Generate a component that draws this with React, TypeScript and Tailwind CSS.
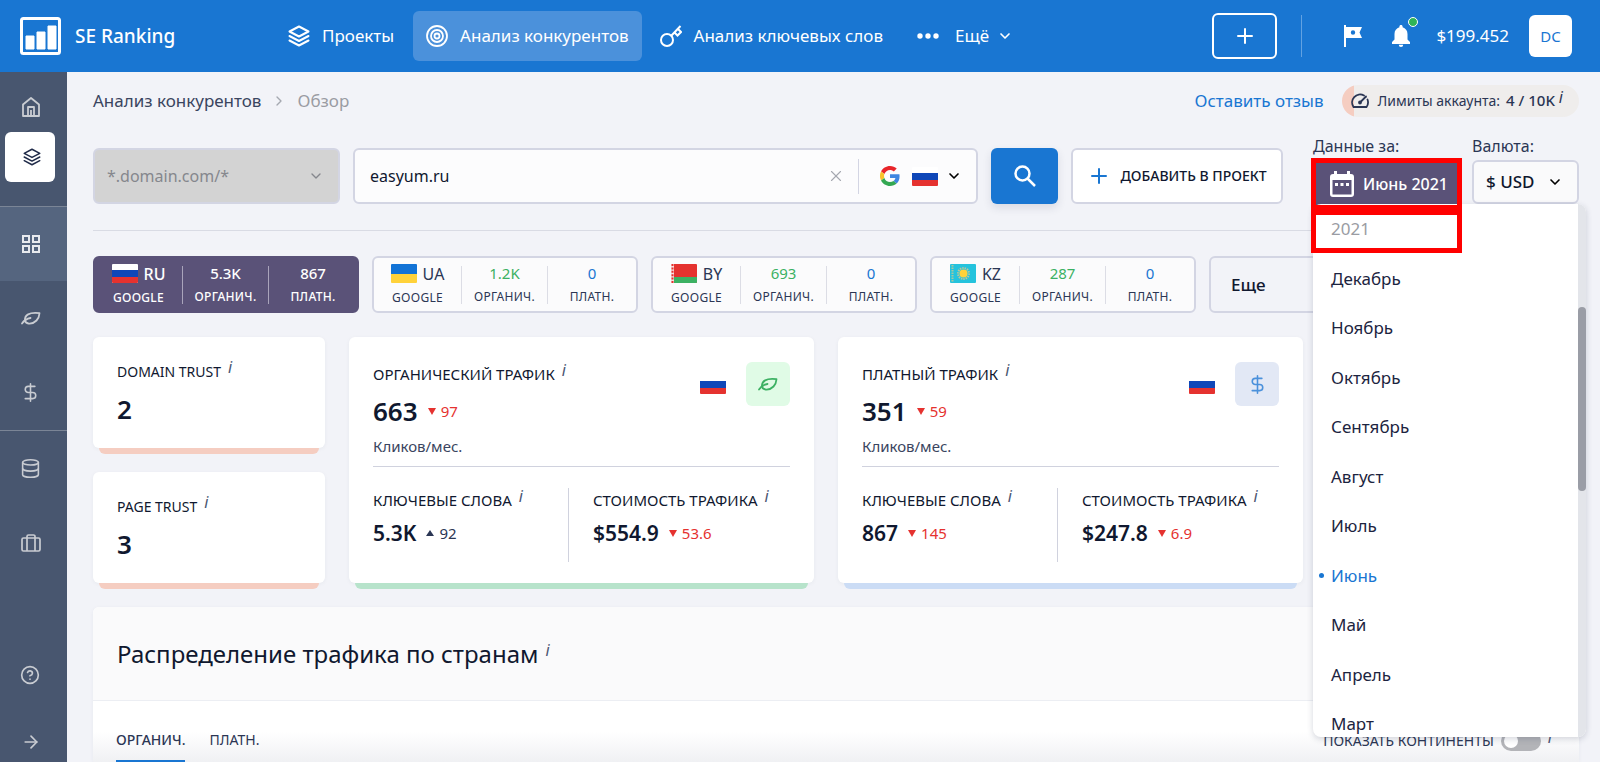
import React from 'react';
import {
  ArrowRight,
  ChevronDown,
  ChevronRight,
  CircleHelp,
  Database,
  DollarSign,
  Plus,
  X,
} from 'lucide-react';

const regions = [
  { code: 'RU', organic: '5.3K', paid: '867', active: true },
  { code: 'UA', organic: '1.2K', paid: '0' },
  { code: 'BY', organic: '693', paid: '0' },
  { code: 'KZ', organic: '287', paid: '0' },
];

const months = ['Декабрь', 'Ноябрь', 'Октябрь', 'Сентябрь', 'Август', 'Июль', 'Июнь', 'Май', 'Апрель', 'Март'];

function Flag({ code }: { code: string }) {
  return (
    <svg viewBox="0 0 26 19" className="w-[26px] h-[19px] shrink-0" aria-label={code}>
      {code === 'RU' && (
        <>
          <rect width="26" height="19" rx="1" fill="#fff" />
          <rect y="6" width="26" height="7" fill="#0f47b8" />
          <path d="M0 13h26v5a1 1 0 0 1-1 1H1a1 1 0 0 1-1-1z" fill="#e5322f" />
        </>
      )}
      {code === 'UA' && (
        <>
          <path d="M1 0h24a1 1 0 0 1 1 1v9H0V1a1 1 0 0 1 1-1z" fill="#1273d6" />
          <path d="M0 10h26v8a1 1 0 0 1-1 1H1a1 1 0 0 1-1-1z" fill="#ffd23a" />
        </>
      )}
      {code === 'BY' && (
        <>
          <rect width="26" height="19" rx="1" fill="#e5322f" />
          <path d="M3 13h23v5a1 1 0 0 1-1 1H3z" fill="#3cb163" />
          <rect width="3" height="19" fill="#f7dede" />
          <path d="M1.5 0v19" stroke="#e5322f" strokeWidth="2" strokeDasharray="2 1.4" />
        </>
      )}
      {code === 'KZ' && (
        <>
          <rect width="26" height="19" rx="1" fill="#25c3dd" />
          <path d="M2.5 1v17" stroke="#a9c7a0" strokeWidth="2" strokeDasharray="1.5 1" />
          <circle cx="13.5" cy="9.5" r="5.5" fill="none" stroke="#bfc69a" strokeWidth="2" strokeDasharray="1.4 1" />
          <circle cx="13.5" cy="9.5" r="4" fill="#ffd23a" />
        </>
      )}
    </svg>
  );
}

function Layers({ className, stroke }: { className: string; stroke: number }) {
  return (
    <svg viewBox="0 0 22 22" className={className} fill="none" stroke="currentColor" strokeWidth={stroke} strokeLinejoin="round" strokeLinecap="round">
      <path d="M11 1.5 20.5 6.5 11 11.5 1.5 6.5z" />
      <path d="M1.5 11 11 16l9.5-5M1.5 15.500l9.500 5 9.500-5" />
    </svg>
  );
}

function Leaf() {
  return (
    <svg viewBox="0 0 20 14" className="w-5 h-[14px]" fill="none" stroke="currentColor" strokeWidth="1.8" strokeLinecap="round" strokeLinejoin="round">
      <path d="M1 12.500C3 9.500 6 7.500 9.500 7" />
      <path d="M4 9.500C3.500 4 8 1 18.500 2.200 18.300 5 17.500 7.500 15.500 9.500 13 12 10 12.800 7.500 12.500 5.500 12.200 4.300 11.200 4 9.500z" />
    </svg>
  );
}

function Dollar() {
  return <DollarSign className="w-[21px] h-[21px]" strokeWidth={1.8} />;
}

function GoogleLogo() {
  return (
    <svg viewBox="0 0 48 48" className="w-5 h-5">
      <path fill="#e8252a" d="M24 9.500c3.500 0 6.700 1.200 9.200 3.600l6.900-6.900C35.900 2.400 30.500 0 24 0 14.600 0 6.500 5.400 2.600 13.200l8 6.200C12.400 13.700 17.700 9.500 24 9.500z" />
      <path fill="#3f86e0" d="M47 24.500c0-1.600-.2-3.100-.4-4.500H24v9h12.900c-.6 3-2.300 5.500-4.800 7.200l7.700 6C44.400 38 47 31.800 47 24.500z" />
      <path fill="#f9c32a" d="M10.500 28.600A14.500 14.500 0 0 1 10.500 19.400l-8-6.200a24 24 0 0 0 0 21.600z" />
      <path fill="#34a853" d="M24 48c6.500 0 11.900-2.100 15.900-5.800l-7.700-6c-2.200 1.500-4.900 2.300-8.200 2.300-6.300 0-11.600-4.200-13.500-9.900l-8 6.200C6.500 42.600 14.600 48 24 48z" />
    </svg>
  );
}

function Info() {
  return <sup className="ml-[7px] -top-1 text-base leading-none italic font-normal text-[#4a5672]">i</sup>;
}

function Delta({ value, up }: { value: string; up?: boolean }) {
  return (
    <span className={`flex items-center gap-[5px] text-[15px] font-normal ${up ? 'text-[#2b3654]' : 'text-[#e5322f]'}`}>
      <svg viewBox="0 0 8 7" className="w-2 h-[7px]" fill="currentColor">
        {up ? <path d="M4 0 8 6H0z" /> : <path d="M0 0h8L4 7z" />}
      </svg>
      {value}
    </span>
  );
}

function Header() {
  return (
    <header className="flex h-[72px] shrink-0 items-center bg-[#1976d2] pl-5 pr-7 text-white">
      <a href="#" className="flex w-[268px] shrink-0 items-center gap-[14px] text-[19px] font-medium">
        <svg viewBox="0 0 41 38" className="h-[38px] w-[41px]">
          <rect x="1.5" y="1.5" width="38" height="35" rx="2" fill="none" stroke="#fff" strokeWidth="3" />
          <path d="M6 19h8v13H6zM17 15h8v17h-8zM28 9h8v23h-8z" fill="#fff" stroke="#fff" strokeLinejoin="round" />
        </svg>
        SE Ranking
      </a>
      <nav className="flex items-center text-[17px] font-[450]">
        <a href="#" className="flex items-center gap-3 pr-[19px]">
          <Layers className="w-[22px] h-[22px]" stroke={2} />
          Проекты
        </a>
        <a href="#" className="flex h-[50px] items-center gap-3 rounded-md bg-[#4b91db] px-[13px]">
          <svg viewBox="0 0 22 22" className="w-[22px] h-[22px]" fill="none" stroke="#fff" strokeWidth="1.8">
            <circle cx="11" cy="11" r="10" />
            <circle cx="11" cy="11" r="6" />
            <circle cx="11" cy="11" r="2.5" />
          </svg>
          Анализ конкурентов
        </a>
        <a href="#" className="flex items-center gap-3 pl-[18px]">
          <svg viewBox="0 0 22 22" className="w-[22px] h-[22px]" fill="none" stroke="#fff" strokeWidth="2">
            <circle cx="7" cy="15" r="6" />
            <path d="M11.500 10.500 20.500 1M14.500 7.500l3 3 3.500-3.500-3-3" />
          </svg>
          Анализ ключевых слов
        </a>
        <button className="ml-[34px] flex items-center gap-4">
          <svg viewBox="0 0 22 6" className="w-[22px] h-[6px]" fill="#fff">
            <circle cx="3" cy="3" r="2.7" />
            <circle cx="11" cy="3" r="2.7" />
            <circle cx="19" cy="3" r="2.7" />
          </svg>
          Ещё
          <ChevronDown className="-ml-2 w-4 h-4" strokeWidth={2.5} />
        </button>
      </nav>
      <div className="ml-auto flex items-center">
        <button aria-label="Добавить" className="flex h-[46px] w-[65px] items-center justify-center rounded-md border-2 border-white">
          <Plus className="w-6 h-6" />
        </button>
        <span className="ml-6 h-[42px] w-px bg-[#62a2e2]" />
        <button aria-label="Обучение" className="ml-[42px]">
          <svg viewBox="0 0 18 22" className="w-[18px] h-[22px]" fill="#fff">
            <path fillRule="evenodd" d="M0 0h2v2h16l-2.500 5.500L18 13H2v9H0zM9 5.300a2.200 2.200 0 1 0 0 4.400 2.200 2.200 0 0 0 0-4.400z" />
          </svg>
        </button>
        <button aria-label="Уведомления" className="relative ml-[30px]">
          <svg viewBox="0 0 18 22" className="w-[18px] h-[22px]" fill="#fff">
            <path d="M9 0c1 0 1.600.7 1.600 1.600v.6C13.500 3 15.500 5.500 15.500 9v5.500L18 17v2H0v-2l2.500-2.500V9c0-3.500 2-6 4.900-6.800v-.6C7.400.7 8 0 9 0zM6.800 19.800h4.400a2.200 2.200 0 0 1-4.400 0z" />
          </svg>
          <span className="absolute -right-2 -top-2 h-[10px] w-[10px] rounded-full border border-white bg-[#2fb457]" />
        </button>
        <span className="ml-[26px] text-[17px]">$199.452</span>
        <button className="ml-5 h-[42px] w-[43px] rounded-md bg-white text-[15px] text-[#1976d2]">DC</button>
      </div>
    </header>
  );
}

function Sidebar() {
  return (
    <aside className="flex w-[67px] shrink-0 flex-col items-start bg-[#48566f] text-[#c9ccd2]">
      <a href="#" aria-label="Главная" className="flex h-[60px] w-[61px] items-center justify-center pt-[10px]">
        <svg viewBox="0 0 18 20" className="w-[18px] h-5" fill="none" stroke="currentColor" strokeWidth="1.8" strokeLinejoin="round">
          <path d="M1 7.500 9 1l8 6.500V19H1z" />
          <path d="M6 19v-9h6v9M9 13v6" />
        </svg>
      </a>
      <a href="#" aria-label="Проекты" className="ml-[5px] flex h-[50px] w-[50px] items-center justify-center rounded-md bg-white pl-1 text-[#1f2a48]">
        <Layers className="w-[18px] h-[18px]" stroke={1.8} />
      </a>
      <div className="mt-6 flex w-full flex-col border-y border-[#7b8596]">
        <a href="#" aria-label="Обзор" className="flex h-[74px] items-center bg-[#55657f] pl-[22px] text-[#e8eaee]">
          <svg viewBox="0 0 18 18" className="w-[18px] h-[18px]" fill="none" stroke="currentColor" strokeWidth="2">
            <path d="M1 1h6v6H1zM11 1h6v6h-6zM1 11h6v6H1zM11 11h6v6h-6z" />
          </svg>
        </a>
        <a href="#" aria-label="Органический трафик" className="flex h-[74px] items-center pl-[21px]">
          <Leaf />
        </a>
        <a href="#" aria-label="Платный трафик" className="flex h-[75px] items-center pl-[20px]">
          <Dollar />
        </a>
      </div>
      <a href="#" aria-label="База" className="flex h-[75px] items-center pl-[20px]">
        <Database className="w-[21px] h-[21px]" strokeWidth={1.8} />
      </a>
      <a href="#" aria-label="Кейсы" className="flex h-[74px] items-center pl-[21px]">
        <svg viewBox="0 0 20 18" className="w-5 h-[18px]" fill="none" stroke="currentColor" strokeWidth="1.7">
          <rect x="1" y="4" width="18" height="13" rx="1.5" />
          <path d="M6 17V2.500A1.500 1.500 0 0 1 7.500 1h5A1.500 1.500 0 0 1 14 2.500V17" />
        </svg>
      </a>
      <a href="#" aria-label="Помощь" className="mt-auto mb-[23px] flex h-[68px] items-center pl-[20px]">
        <CircleHelp className="w-5 h-5" />
      </a>
      <button aria-label="Развернуть" className="mb-[10px] flex h-5 items-center pl-[21px]">
        <ArrowRight className="w-5 h-5" />
      </button>
    </aside>
  );
}

function Breadcrumbs() {
  return (
    <div className="flex h-[33px] items-center text-[17px]">
      <a href="#" className="text-[#3a4560]">Анализ конкурентов</a>
      <ChevronRight className="mx-[10px] w-4 h-4 text-[#a5a8b0]" />
      <span className="text-[#9a9ca3]">Обзор</span>
      <a href="#" className="ml-auto text-[#1976d2]">Оставить отзыв</a>
      <div className="ml-[18px] flex h-8 items-center rounded-full bg-[linear-gradient(90deg,#f5cdc1_12px,#efedec_12px)] pl-[9px] pr-4 text-sm text-[#2b3654]">
        <svg viewBox="0 0 18 16" className="mr-[9px] w-[18px] h-4" fill="none" stroke="currentColor" strokeWidth="1.8" strokeLinecap="round">
          <path d="M13 2.500A8 8 0 0 0 2.500 14h13a8 8 0 0 0 1-7.500" />
          <path d="m9 9.500 6-6" />
          <circle cx="9" cy="9.5" r="1" />
        </svg>
        Лимиты аккаунта:
        <span className="ml-[6px] text-[15px] font-medium">4 / 10K</span>
        <sup className="ml-1 -top-1 text-base italic">i</sup>
      </div>
    </div>
  );
}

function MonthPicker() {
  return (
    <div className="relative w-[151px]">
      <span className="ml-[2px] block text-base leading-6 text-[#2b3654]">Данные за:</span>
      <button className="flex h-[52px] w-full items-center gap-[9px] bg-[#5a5278] pl-[19px] text-base font-medium text-white">
        <svg viewBox="0 0 24 26" className="w-6 h-[26px]">
          <path fillRule="evenodd" fill="#fff" d="M4 0h3v3h10V0h3v3h1a3 3 0 0 1 3 3v17a3 3 0 0 1-3 3H3a3 3 0 0 1-3-3V6a3 3 0 0 1 3-3h1zM2.500 9v14.500h19V9z" />
          <path fill="#fff" d="M5 12h3v3H5zM10.500 12h3v3h-3zM16 12h3v3h-3z" />
        </svg>
        Июнь 2021
      </button>
      <div className="absolute left-[2px] top-[70px] z-10 flex h-[533px] w-[273px] overflow-hidden rounded-lg bg-white shadow-[0_2px_6px_rgba(40,50,80,0.2)]">
        <ul className="flex h-[545px] flex-1 flex-col text-[17px] text-[#1c2440]">
          <li className="flex flex-1 items-center pl-[18px] text-[#9a9ca3]">2021</li>
          {months.map((month) => (
            <li key={month} className="flex flex-1">
              <button className={`flex w-full items-center pl-[6px] ${month === 'Июнь' ? 'text-[#1976d2]' : ''}`}>
                <span className={`mr-[7px] h-[5px] w-[5px] rounded-full ${month === 'Июнь' ? 'bg-[#1976d2]' : ''}`} />
                {month}
              </button>
            </li>
          ))}
        </ul>
        <div className="w-2 bg-[#e3e5ea] pt-[103px]">
          <div className="h-[184px] rounded-full bg-[#9a9da6]" />
        </div>
      </div>
      {/* highlight frames */}
      <div className="pointer-events-none absolute left-0 top-6 z-20 h-[52px] w-full border-5 border-[#f00]" />
      <div className="pointer-events-none absolute left-0 top-[76px] z-20 h-[43px] w-full border-5 border-[#f00]" />
    </div>
  );
}

function SearchBar() {
  return (
    <div className="flex items-end pt-[17px] pb-[23px] border-b border-[#d9dbe4]">
      <form className="mb-[3px] flex h-[56px] min-w-0 flex-1 items-stretch">
        <label className="relative w-[247px] shrink-0">
          <select
            disabled
            aria-label="Тип домена"
            className="h-full w-full appearance-none rounded-md border-2 border-[#d3d5e3] bg-[#d3d3d3] px-3 text-base text-[#85878d] opacity-100"
          >
            <option>*.domain.com/*</option>
          </select>
          <ChevronDown className="absolute right-4 top-5 w-4 h-4 text-[#85878d]" />
        </label>
        <div className="ml-[13px] flex min-w-0 flex-1 items-center rounded-md border-2 border-[#d3d5e3] bg-[#fcfcfd] pr-[14px]">
          <input aria-label="Домен" defaultValue="easyum.ru" className="h-full min-w-0 flex-1 bg-transparent pl-[15px] text-base text-[#10182f] outline-none" />
          <button type="button" aria-label="Очистить">
            <X className="w-[18px] h-[18px] text-[#a5a8b0]" strokeWidth={1.5} />
          </button>
          <span className="ml-[13px] mr-[21px] h-[35px] w-px bg-[#d3d5e3]" />
          <button type="button" aria-label="База Google" className="flex items-center">
            <GoogleLogo />
            <span className="ml-3"><Flag code="RU" /></span>
            <ChevronDown className="ml-2 w-4 h-4" strokeWidth={2.5} />
          </button>
        </div>
        <button aria-label="Найти" className="ml-[13px] flex w-[67px] items-center justify-center rounded-md bg-[#1976d2] text-white shadow-[0_4px_8px_rgba(40,50,80,0.12)]">
          <svg viewBox="0 0 22 22" className="w-[22px] h-[22px]" fill="none" stroke="currentColor" strokeWidth="2.5">
            <circle cx="8.5" cy="8.5" r="7" />
            <path d="m13.500 13.500 7.500 7.500" />
          </svg>
        </button>
        <button type="button" className="ml-[13px] flex w-[212px] items-center justify-center gap-[9px] rounded-md border-2 border-[#d3d5e3] bg-white text-sm font-medium text-[#10182f]">
          <Plus className="w-6 h-6 text-[#1976d2]" />
          ДОБАВИТЬ В ПРОЕКТ
        </button>
      </form>
      <div className="ml-7 -mb-[3px]">
        <MonthPicker />
      </div>
      <label className="ml-[10px] mb-[3px] w-[107px]">
        <span className="block pb-[2px] text-base leading-6 text-[#2b3654]">Валюта:</span>
        <span className="relative block">
          <select className="h-[44px] w-full appearance-none rounded-md border-2 border-[#d3d5e3] bg-[#fafafb] pl-3 text-[17px] font-medium text-[#10182f]">
            <option>$ USD</option>
          </select>
          <ChevronDown className="absolute right-4 top-[14px] w-4 h-4" strokeWidth={2.5} />
        </span>
      </label>
    </div>
  );
}

function RegionTabs() {
  return (
    <div className="flex gap-[13px] pt-[25px]">
      {regions.map(({ code, organic, paid, active }) => (
        <button
          key={code}
          className={`flex h-[57px] w-[266px] shrink-0 items-center rounded-md border-2 text-[15px] leading-5 ${
            active ? 'border-[#5a5278] bg-[#5a5278] font-medium text-white' : 'border-[#d3d5e3] bg-[#fbfbfc] text-[#2b3654]'
          }`}
        >
          <span className="flex w-[87px] flex-col items-center pt-1">
            <span className="flex items-center gap-[6px] text-base leading-5">
              <Flag code={code} />
              {code}
            </span>
            <span className="mt-[2px] text-xs leading-6 tracking-wide">GOOGLE</span>
          </span>
          <span className={`flex h-[38px] w-[87px] flex-col items-center justify-center border-x pt-[3px] ${active ? 'border-[#a9a4bb]' : 'border-[#dcdde5]'}`}>
            <span className={active ? '' : 'text-[#3cb163]'}>{organic}</span>
            <span className="mt-[2px] text-xs leading-6 tracking-wide">ОРГАНИЧ.</span>
          </span>
          <span className="flex flex-1 flex-col items-center pt-[3px]">
            <span className={active ? '' : 'text-[#1976d2]'}>{paid}</span>
            <span className="mt-[2px] text-xs leading-6 tracking-wide">ПЛАТН.</span>
          </span>
        </button>
      ))}
      <button className="h-[57px] min-w-0 flex-1 rounded-md border-2 border-[#d3d5e3] pl-5 text-left text-[17px] font-medium text-[#10182f]">
        Еще
      </button>
    </div>
  );
}

function TrustCard({ title, value }: { title: string; value: string }) {
  return (
    <div>
      <div className="h-[111px] rounded-md bg-white px-6 pt-[23px] shadow-[0_1px_4px_rgba(40,50,80,0.05)]">
        <h3 className="text-sm leading-6 text-[#10182f]">{title}<Info /></h3>
        <p className="pt-[9px] text-[26px] leading-8 font-semibold text-[#10182f]">{value}</p>
      </div>
      <div className="mx-[6px] h-[6px] rounded-b-md bg-[#f5cdc1]" />
    </div>
  );
}

interface TrafficProps {
  title: string;
  total: string;
  totalDelta: string;
  keywords: string;
  keywordsDelta: string;
  keywordsUp?: boolean;
  cost: string;
  costDelta: string;
  paid?: boolean;
}

function TrafficCard({ title, total, totalDelta, keywords, keywordsDelta, keywordsUp, cost, costDelta, paid }: TrafficProps) {
  return (
    <div className="flex flex-col">
      <div className="flex-1 rounded-md bg-white px-6 pt-[25px] shadow-[0_1px_4px_rgba(40,50,80,0.05)]">
        <div className="flex h-[105px] border-b border-[#d0d2de]">
          <div className="flex-1">
            <h3 className="text-[15px] leading-6 text-[#10182f]">{title}<Info /></h3>
            <p className="flex items-center gap-[10px] pt-[9px] text-[26px] leading-8 font-semibold text-[#10182f]">
              {total}
              <Delta value={totalDelta} />
            </p>
            <p className="pt-[9px] text-[15px] leading-5 text-[#3a4560]">Кликов/мес.</p>
          </div>
          <div className="flex h-[44px] items-center gap-5">
            <Flag code="RU" />
            <span className={`flex h-[44px] w-[44px] items-center justify-center rounded-md ${paid ? 'bg-[#e2e8f5] text-[#4b91db]' : 'bg-[#e0fbe6] text-[#3cb163]'}`}>
              {paid ? <Dollar /> : <Leaf />}
            </span>
          </div>
        </div>
        <div className="flex pt-[21px]">
          <div className="h-[74px] w-[47%] border-r border-[#d0d2de]">
            <h4 className="text-[15px] leading-6 text-[#10182f]">КЛЮЧЕВЫЕ СЛОВА<Info /></h4>
            <p className="flex items-center gap-[10px] pt-[7px] text-[21px] leading-7 font-semibold text-[#10182f]">
              {keywords}
              <Delta value={keywordsDelta} up={keywordsUp} />
            </p>
          </div>
          <div className="pl-6">
            <h4 className="text-[15px] leading-6 text-[#10182f]">СТОИМОСТЬ ТРАФИКА<Info /></h4>
            <p className="flex items-center gap-[10px] pt-[7px] text-[21px] leading-7 font-semibold text-[#10182f]">
              {cost}
              <Delta value={costDelta} />
            </p>
          </div>
        </div>
      </div>
      <div className={`mx-[6px] h-[6px] rounded-b-md ${paid ? 'bg-[#cbdcf5]' : 'bg-[#b7e3cb]'}`} />
    </div>
  );
}

function CountriesSection() {
  return (
    <section className="mt-[18px] flex min-h-0 flex-1 flex-col rounded-t-md bg-white shadow-[0_1px_4px_rgba(40,50,80,0.05)]">
      <h2 className="flex h-[94px] shrink-0 items-center rounded-t-md border-b border-[#eceef3] bg-[#fafafb] px-6 text-2xl font-normal text-[#10182f]">
        Распределение трафика по странам
        <Info />
      </h2>
      <div className="flex flex-1 items-start px-[23px] pt-[26px] text-sm text-[#2b3654] bg-linear-to-b from-white from-50% to-[#eff0f3]">
        <div role="tablist" className="flex gap-6">
          <button role="tab" className="h-[36px] border-b-3 border-[#1976d2] pb-2 font-medium">ОРГАНИЧ.</button>
          <button role="tab" className="h-[36px] pb-[11px]">ПЛАТН.</button>
        </div>
        <label className="ml-auto mr-1 flex h-[28px] items-center text-sm">
          ПОКАЗАТЬ КОНТИНЕНТЫ
          <input type="checkbox" className="peer sr-only" />
          <span className="ml-[7px] flex h-5 w-[40px] items-center rounded-full bg-[#b3b4b8] px-[3px]">
            <span className="h-[14px] w-[14px] rounded-full bg-white" />
          </span>
          <Info />
        </label>
      </div>
    </section>
  );
}

export default function App() {
  return (
    <div className="flex h-screen flex-col overflow-hidden bg-[#f2f3f8] font-['Noto_Sans',sans-serif]">
      <Header />
      <div className="flex min-h-0 flex-1">
        <Sidebar />
        <main className="flex min-w-0 flex-1 flex-col pl-[26px] pr-[21px] pt-3">
          <Breadcrumbs />
          <SearchBar />
          <RegionTabs />
          <div className="grid grid-cols-[232fr_465fr_465fr_252fr] gap-6 pt-6">
            <div className="flex flex-col gap-[18px]">
              <TrustCard title="DOMAIN TRUST" value="2" />
              <TrustCard title="PAGE TRUST" value="3" />
            </div>
            <TrafficCard
              title="ОРГАНИЧЕСКИЙ ТРАФИК"
              total="663"
              totalDelta="97"
              keywords="5.3K"
              keywordsDelta="92"
              keywordsUp
              cost="$554.9"
              costDelta="53.6"
            />
            <TrafficCard
              title="ПЛАТНЫЙ ТРАФИК"
              total="351"
              totalDelta="59"
              keywords="867"
              keywordsDelta="145"
              cost="$247.8"
              costDelta="6.9"
              paid
            />
          </div>
          <CountriesSection />
        </main>
      </div>
    </div>
  );
}
